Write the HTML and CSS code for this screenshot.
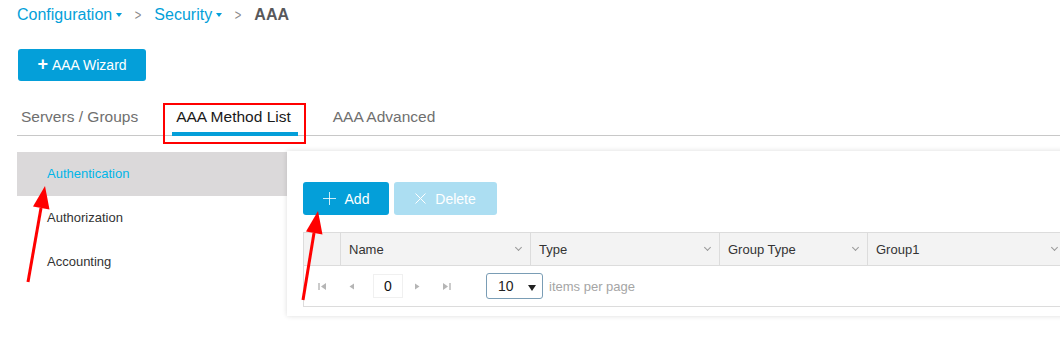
FILE: index.html
```html
<!DOCTYPE html>
<html>
<head>
    <title>AAA</title>
    <meta charset="UTF-8">
    <link rel="stylesheet" href="styles.css">
</head>
<body>
    <div class="page">
        <div class="breadcrumb">
            <a class="crumb">Configuration <span class="caret"></span></a>
            <span class="sep">&gt;</span>
            <a class="crumb">Security <span class="caret"></span></a>
            <span class="sep">&gt;</span>
            <span class="current">AAA</span>
        </div>

        <button class="btn btn-wizard"><span class="plus-bold">+</span> AAA Wizard</button>

        <div class="tabs">
            <div class="tab">Servers / Groups</div>
            <div class="tab active">AAA Method List<span class="callout"></span></div>
            <div class="tab">AAA Advanced</div>
        </div>

        <div class="content">
            <ul class="side">
                <li class="selected">Authentication</li>
                <li>Authorization</li>
                <li>Accounting</li>
            </ul>

            <div class="panel">
                <div class="toolbar">
                    <button class="btn btn-add">
                        <svg width="13" height="13" viewBox="0 0 13 13"><path d="M6.5 0v13M0 6.5h13" stroke="#fff" stroke-width="1" fill="none" opacity="0.8"/></svg>
                        Add
                    </button>
                    <button class="btn btn-delete">
                        <svg width="11" height="11" viewBox="0 0 11 11"><path d="M0.5 0.5l10 10M10.5 0.5l-10 10" stroke="#fff" stroke-width="1" fill="none"/></svg>
                        Delete
                    </button>
                </div>

                <div class="grid">
                    <div class="grid-head">
                        <div class="col col-check"></div>
                        <div class="col col-name">Name<span class="chev"></span></div>
                        <div class="col col-type">Type<span class="chev"></span></div>
                        <div class="col col-gtype">Group Type<span class="chev"></span></div>
                        <div class="col col-g1">Group1<span class="chev"></span></div>
                    </div>
                    <div class="pager">
                        <span class="pg-icon">
                            <svg width="9" height="9" viewBox="0 0 9 9"><path d="M1 1v7" stroke="#b5b5b5" stroke-width="1.4"/><path d="M8 1L3 4.5 8 8z" fill="#b5b5b5"/></svg>
                        </span>
                        <span class="pg-icon">
                            <svg width="9" height="9" viewBox="0 0 9 9"><path d="M7 1.5L2.5 4.5 7 7.5z" fill="#b5b5b5"/></svg>
                        </span>
                        <span class="pg-num">0</span>
                        <span class="pg-icon">
                            <svg width="9" height="9" viewBox="0 0 9 9"><path d="M2 1.5L6.5 4.5 2 7.5z" fill="#b5b5b5"/></svg>
                        </span>
                        <span class="pg-icon">
                            <svg width="9" height="9" viewBox="0 0 9 9"><path d="M1 1l5 3.5L1 8z" fill="#b5b5b5"/><path d="M8 1v7" stroke="#b5b5b5" stroke-width="1.4"/></svg>
                        </span>
                        <span class="pg-size">10 <span class="down"></span></span>
                        <span class="pg-label">items per page</span>
                    </div>
                </div>
            </div>
        </div>
    </div>

    <!-- annotation arrows -->
    <svg class="arrows" width="1060" height="343" viewBox="0 0 1060 343">
        <line x1="28" y1="282" x2="41" y2="208" stroke="#ff0000" stroke-width="3"/>
        <polygon points="45,186 49.5,209.5 33,206.5" fill="#ff0000"/>
        <line x1="303" y1="300" x2="314" y2="233" stroke="#ff0000" stroke-width="3"/>
        <polygon points="318,211 322.5,234.5 306,231.5" fill="#ff0000"/>
    </svg>
</body>
</html>
```

FILE: styles.css
```css
body {
    margin: 0;
    width: 1060px;
    height: 343px;
    overflow: hidden;
    position: relative;
    background: #fff;
    font-family: "Liberation Sans", Arial, sans-serif;
    color: #333;
}
.page {
    padding-left: 17px;
}

/* breadcrumb */
.breadcrumb {
    display: flex;
    align-items: center;
    padding-top: 5px;
    height: 20px;
    font-size: 16px;
    line-height: 20px;
}
.crumb {
    color: #049fd9;
    display: flex;
    align-items: center;
}
.caret {
    display: inline-block;
    margin-left: 4px;
    width: 0;
    height: 0;
    border-left: 3.5px solid transparent;
    border-right: 3.5px solid transparent;
    border-top: 4px solid #049fd9;
}
.sep {
    color: #8a8a8a;
    font-size: 14px;
    margin: 0 12px 0 12px;
    transform: scaleX(0.8);
}
.current {
    color: #58585b;
    font-weight: bold;
}

/* buttons */
.btn {
    border: none;
    border-radius: 3px;
    font-family: inherit;
    color: #fff;
    display: flex;
    align-items: center;
    justify-content: center;
    padding: 0;
    cursor: pointer;
}
.btn-wizard {
    margin-top: 24px;
    width: 128px;
    height: 32px;
    background: #049fd9;
    font-size: 14px;
    margin-left: 1px;
}
.plus-bold {
    font-weight: bold;
    font-size: 18px;
    margin-right: 4px;
    margin-top: -2px;
}

/* tabs */
.tabs {
    display: flex;
    margin-top: 20px;
    border-bottom: 1px solid #c8c8c8;
    height: 34px;
}
.tab {
    position: relative;
    padding: 7px 4px 0;
    font-size: 15.5px;
    line-height: 18px;
    color: #6f6f6f;
}
.tab + .tab {
    margin-left: 30px;
}
.tab.active {
    color: #1a1a1a;
    padding-right: 7px;
}
.tab.active::after {
    content: "";
    position: absolute;
    left: 0;
    right: 0;
    bottom: -1px;
    height: 4px;
    background: #049fd9;
}
.tab.active + .tab {
    margin-left: 31px;
}
.callout {
    position: absolute;
    left: -9px;
    right: -8px;
    top: 2px;
    bottom: -9px;
    border: 2px solid #ff0000;
}

/* content */
.content {
    display: flex;
    margin-top: 15px;
}
.side {
    list-style: none;
    margin: 1px 0 0;
    padding: 0;
    width: 270px;
    flex-shrink: 0;
}
.side li {
    height: 44px;
    line-height: 43px;
    padding-left: 30px;
    font-size: 13px;
    color: #333;
}
.side li.selected {
    background: #dbd9da;
    color: #00b5e8;
}
.panel {
    width: 800px;
    flex-shrink: 0;
    height: 134px;
    padding: 31px 0 0 16px;
    background: #fff;
    box-shadow: 0 0 5px rgba(0, 0, 0, 0.14);
}
.toolbar {
    display: flex;
    gap: 5px;
}
.btn-add {
    width: 86px;
    height: 33px;
    background: #049fd9;
    font-size: 14px;
    gap: 9px;
}
.btn-delete {
    width: 103px;
    height: 33px;
    background: #acdef2;
    font-size: 14px;
    gap: 9px;
}

/* grid */
.grid {
    margin-top: 17px;
    border-left: 1px solid #dcdcdc;
}
.grid-head {
    display: flex;
    height: 32px;
    background: #f3f3f3;
    border-top: 1px solid #dcdcdc;
    border-bottom: 1px solid #dcdcdc;
}
.col {
    display: flex;
    align-items: center;
    justify-content: space-between;
    padding: 0 9px 0 8px;
    font-size: 13px;
    color: #333;
    border-right: 1px solid #dcdcdc;
    box-sizing: border-box;
}
.col-check { width: 37px; }
.col-name { width: 190px; }
.col-type { width: 189px; }
.col-gtype { width: 148px; }
.col-g1 { width: 200px; padding-right: 10px; }
.chev {
    width: 4px;
    height: 4px;
    border-right: 1px solid #999;
    border-bottom: 1px solid #999;
    transform: rotate(45deg);
    margin-top: -3px;
}
.pager {
    display: flex;
    align-items: center;
    height: 40px;
    border-bottom: 1px solid #dcdcdc;
    font-size: 13px;
}
.pg-icon {
    width: 29px;
    display: flex;
    justify-content: center;
}
.pg-icon:first-child {
    margin-left: 4px;
}
.pg-num {
    width: 28px;
    height: 22px;
    line-height: 22px;
    text-align: center;
    color: #111;
    border: 1px solid #f0f0f0;
    margin: 0 0 0 7px;
    font-size: 14px;
}
.pg-size {
    margin-left: 25px;
    height: 24px;
    border: 1px solid #7a9db5;
    border-radius: 3px;
    display: flex;
    align-items: center;
    padding-left: 11px;
    width: 44px;
    font-size: 14px;
    color: #222;
}
.down {
    margin-left: 14px;
    margin-top: 3px;
    width: 0;
    height: 0;
    border-left: 4px solid transparent;
    border-right: 4px solid transparent;
    border-top: 6px solid #222;
}
.pg-label {
    margin-left: 6px;
    color: #a5a5a5;
}

.arrows {
    position: absolute;
    left: 0;
    top: 0;
    pointer-events: none;
}
```
